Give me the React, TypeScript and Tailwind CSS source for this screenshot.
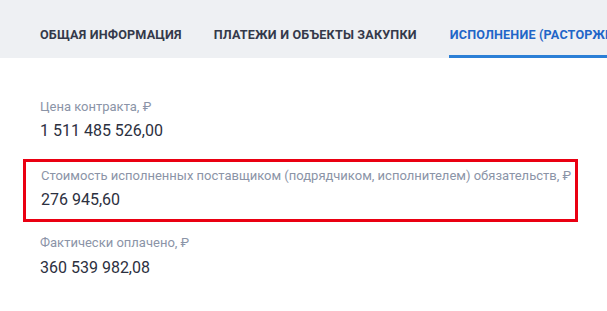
export default function App() {
  const tabs = [
    { label: "ОБЩАЯ ИНФОРМАЦИЯ", active: false },
    { label: "ПЛАТЕЖИ И ОБЪЕКТЫ ЗАКУПКИ", active: false },
    { label: "ИСПОЛНЕНИЕ (РАСТОРЖЕНИЕ) КОНТРАКТА", active: true },
  ]

  return (
    <div className="w-[607px] h-[311px] overflow-hidden bg-white font-['Roboto',sans-serif]">
      {/* Tabs */}
      <div className="h-[58px] bg-[#eef0f3] flex items-end pl-[40px] gap-[32px] whitespace-nowrap overflow-hidden">
        {tabs.map((t) => (
          <div
            key={t.label}
            className={`h-[58px] flex items-center pt-[15px] text-[12.6px] font-bold tracking-[0.18px] border-b-[3px] ${
              t.active ? "text-[#1f66c8] border-[#2b7fd6] pl-[1px]" : "text-[#34394a] border-transparent"
            }`}
          >
            {t.label}
          </div>
        ))}
      </div>

      {/* Content */}
      <div className="pt-[41px] pl-[23px] w-[578px] flex flex-col">
        <div className="pl-[17px] h-[60px]">
          <div className="text-[13px] text-[#8b94a7] leading-[16px]">Цена контракта, ₽</div>
          <div className="mt-[6px] text-[16px] text-[#2c3040] leading-[20px]">1 511 485 526,00</div>
        </div>

        <div className="border-[3px] border-[#ea0012] h-[63px] pl-[15px] pt-[6px]">
          <div className="text-[13px] text-[#8b94a7] leading-[16px] whitespace-nowrap">
            Стоимость исполненных поставщиком (подрядчиком, исполнителем) обязательств, ₽
          </div>
          <div className="mt-[6px] text-[16px] text-[#2c3040] leading-[20px]">276 945,60</div>
        </div>

        <div className="pl-[17px] pt-[13px]">
          <div className="text-[13px] text-[#8b94a7] leading-[16px]">Фактически оплачено, ₽</div>
          <div className="mt-[7px] text-[16px] text-[#2c3040] leading-[20px]">360 539 982,08</div>
        </div>
      </div>
    </div>
  )
}
